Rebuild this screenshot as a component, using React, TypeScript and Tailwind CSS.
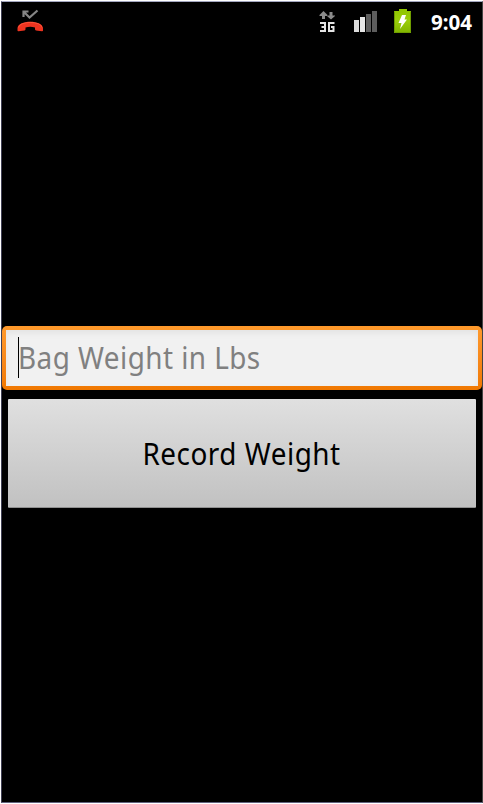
function MissedCall() {
  return (
    <svg className="ml-[15px] mt-[7px] h-[26px] w-[28px]" viewBox="0 0 28 26">
      <path d="M6.500 8V2.500h5M7 3l5.500 5.500L20.500 1.500" fill="none" stroke="#858585" strokeWidth="2.200" />
      <path d="M.5 21.500v-2.500C1 10.500 25.500 10.500 26 19v2.500q0 .9-1 .8l-6-.8q-1-.2-1-1.200v-1.800q-4.800-1.300-9.500 0v1.800q0 1-1 1.200l-6 .8q-1 .1-1-.8z" fill="#ee3420" />
      <path d="M1.500 18.500C2.500 11.700 24 11.700 25 18.500" fill="none" stroke="#ff5a40" strokeWidth=".8" />
    </svg>
  );
}

function Network() {
  return (
    <svg className="mt-[8px] h-[24px] w-[18px]" viewBox="0 0 18 24">
      <path d="M4.500 1L.5 5v1h2.500v3h3V6h2.500V5zM10.500 2h3v3.500H16v.5l-4 3.500L8 6v-.5h2.500z" fill="#8b8b8b" />
      <path d="M1 13H6v8H1M2.500 17H6M15.500 13H10v8h4.500v-4H12" fill="none" stroke="#e4e4e4" strokeWidth="2" />
    </svg>
  );
}

function Signal() {
  return (
    <svg className="ml-[17px] mt-[8px] h-[23px] w-[24px]" viewBox="0 0 24 23">
      <path d="M0 10h5v12H0z" fill="#ddd" />
      <path d="M6 7h5v15H6z" fill="#e6e6e6" />
      <path d="M12 4h5v18h-5zM18 1h5v21h-5z" fill="#5d5d5d" />
    </svg>
  );
}

function Battery() {
  return (
    <svg className="ml-[16px] mt-[7px] h-[25px] w-[18px]" viewBox="0 0 18 25">
      <defs>
        <linearGradient id="charge" x2="0" y2="1">
          <stop stopColor="#8fc400" />
          <stop offset=".5" stopColor="#9bce0a" />
          <stop offset="1" stopColor="#80b400" />
        </linearGradient>
      </defs>
      <path d="M5 0h8v2h4v22H0V2h5z" fill="url(#charge)" />
      <path d="M.5 2.500v21h16v-21" fill="none" stroke="#6f9d00" strokeWidth="1" />
      <path d="M8 6h4l-1.500 4.500H13L6 20l1.500-6H4.500z" fill="#fff" />
    </svg>
  );
}

export default function App() {
  return (
    <div className="h-[804px] w-[483px] overflow-hidden bg-white pl-px pt-px font-['Noto_Sans','Open_Sans',sans-serif]">
      <div className="flex h-[802px] w-[482px] flex-col border-b border-l border-r border-t border-b-[#62627e] border-l-[#404055] border-r-[#444444] border-t-[#a3a6bf] bg-black">
        <header className="flex h-[36px] shrink-0 items-start">
          <MissedCall />
          <div className="ml-auto flex">
            <Network />
            <Signal />
            <Battery />
          </div>
          <time className="ml-[19px] mt-[7px] w-[51px] whitespace-nowrap text-[21px] font-bold leading-[26px] text-white">
            <span className="inline-block origin-left scale-x-[0.98]">9:04</span>
          </time>
        </header>
        <main className="mt-[288px] flex flex-col">
          <div className="h-[64px] rounded-[5px] bg-linear-to-b from-[#ff9a2c] to-[#f07800] p-[4px]">
            <div className="flex h-[56px] items-center bg-[#f1f1f1] pl-[12px] shadow-[inset_0_3px_6px_#e2e2e2]">
              <span className="h-[41px] w-px -translate-y-px bg-black" />
              <span className="-ml-px origin-left scale-x-[0.93] whitespace-nowrap text-[30px] leading-[40px] tracking-[0.48px] text-[#808080]">Bag Weight in Lbs</span>
            </div>
          </div>
          <button className="mx-[6px] mt-[9px] flex h-[109px] items-center justify-center rounded-[1px] border-b border-b-[#909090] bg-linear-to-b from-[#e0e0e0] to-[#c1c1c1] text-[30px] leading-[40px] text-black">
            <span className="translate-y-px scale-x-[0.93] whitespace-nowrap tracking-[0.55px]">Record Weight</span>
          </button>
        </main>
      </div>
    </div>
  );
}
